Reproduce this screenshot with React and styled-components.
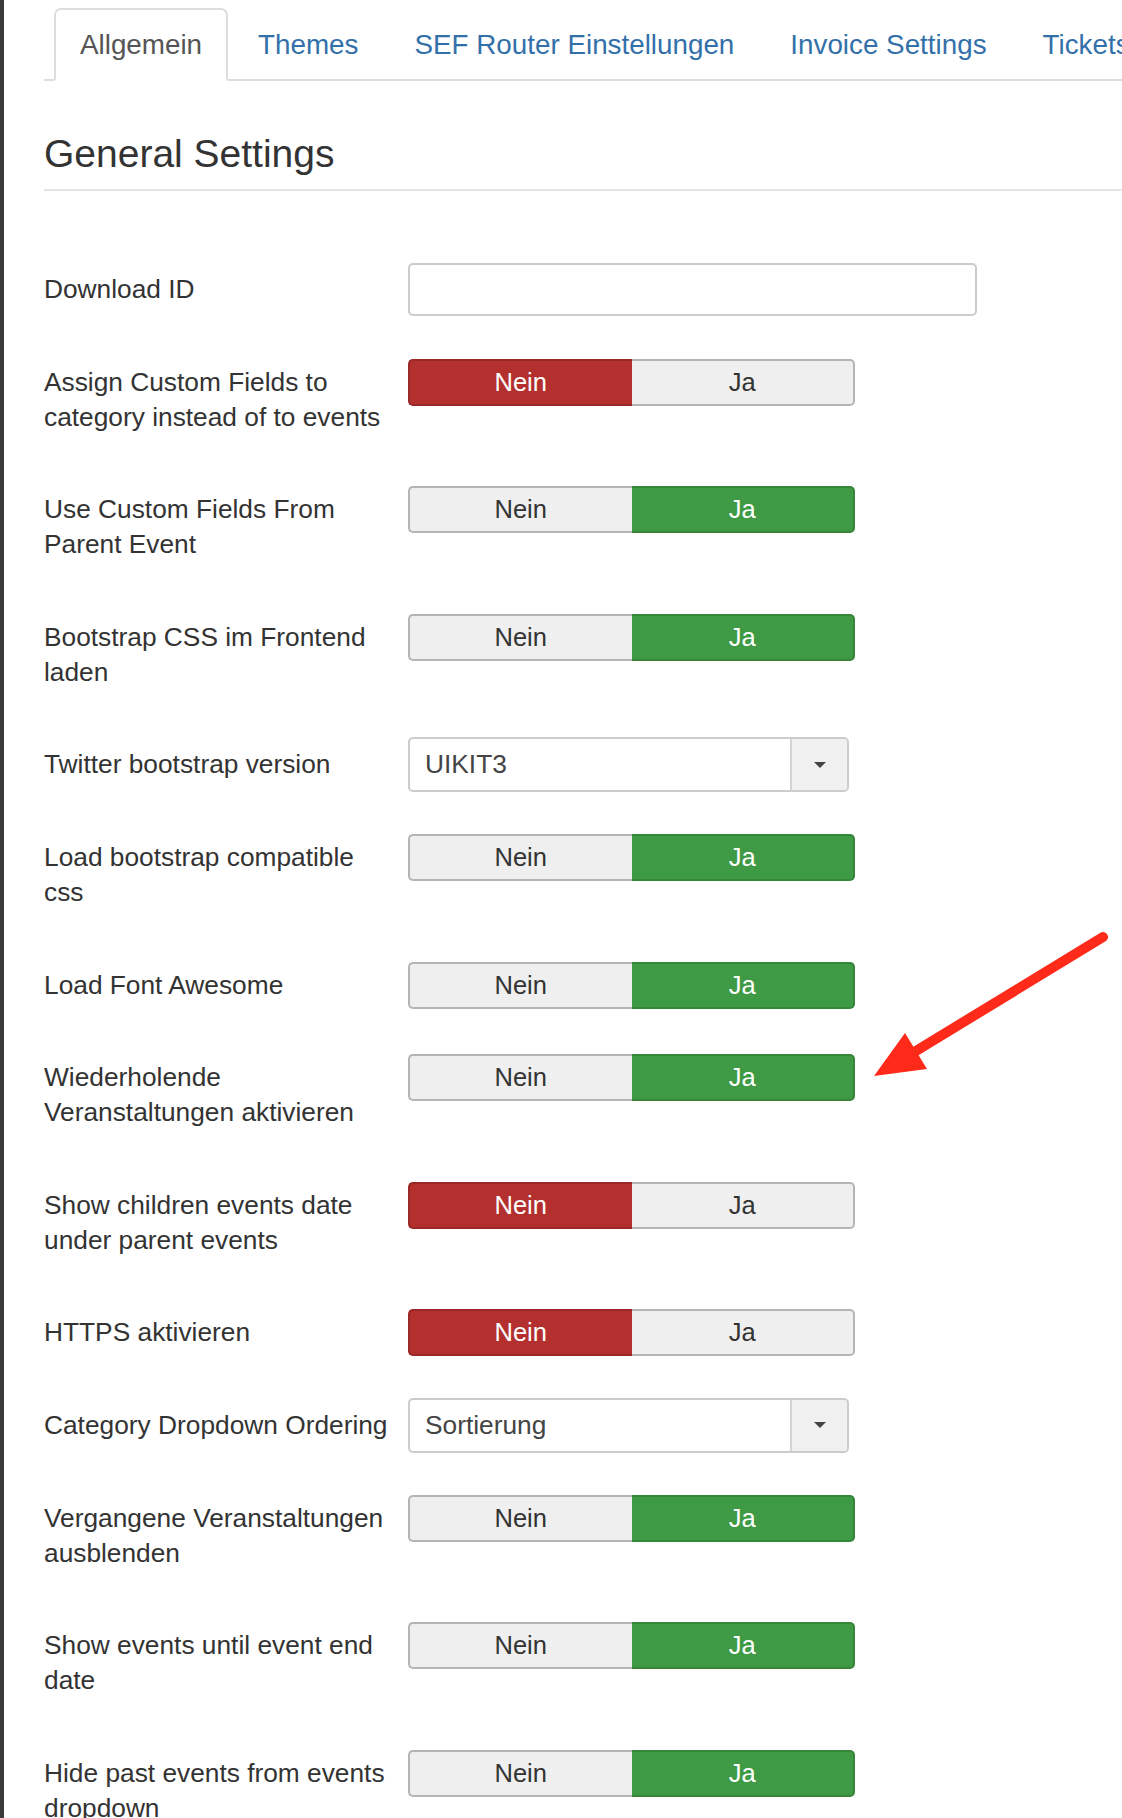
import React from "react";
import styled, { createGlobalStyle } from "styled-components";

const GlobalStyle = createGlobalStyle`
  html, body {
    margin: 0;
    padding: 0;
    background: #fff;
    overflow: hidden;
  }
  body {
    font-family: "Liberation Sans", Arial, Helvetica, sans-serif;
    color: #333;
  }
  * { box-sizing: border-box; }
`;

const Page = styled.div`
  position: relative;
  width: 1122px;
  min-height: 1818px;
  border-left: 4px solid #3a3a3a;
  padding-left: 40px;
  overflow: hidden;
`;

const TabBar = styled.ul`
  display: flex;
  align-items: flex-end;
  list-style: none;
  margin: 8px 0 0;
  padding: 0 0 0 10px;
  border-bottom: 2px solid #dddddd;
  white-space: nowrap;
`;

const Tab = styled.li`
  flex-shrink: 0;
  height: 73px;
  display: flex;
  align-items: center;
  padding: 0 24px;
  margin: 0 4px -2px 0;
  border: 2px solid ${(p) => (p.$active ? "#dddddd" : "transparent")};
  border-bottom: 2px solid ${(p) => (p.$active ? "#ffffff" : "transparent")};
  border-radius: 7px 7px 0 0;
  background: ${(p) => (p.$active ? "#ffffff" : "transparent")};
  font-size: 27.8px;
  color: ${(p) => (p.$active ? "#555555" : "#3370aa")};
`;

const Heading = styled.h2`
  margin: 51px 0 0;
  padding: 0 0 14px;
  font-size: 39px;
  line-height: 43px;
  font-weight: 400;
  color: #333;
  border-bottom: 2px solid #e5e5e5;
`;

const Form = styled.div`
  padding-top: 71px;
`;

const Row = styled.div`
  display: grid;
  grid-template-columns: 364px auto;
  align-items: start;
  margin-bottom: 37.6px;
`;

const Label = styled.div`
  width: 350px;
  padding: 10px 0;
  font-size: 26.3px;
  line-height: 35px;
  color: #333;
  min-height: 55px;
`;

const ControlCell = styled.div`
  height: 55px;
  display: flex;
  align-items: center;
`;

const TextInput = styled.div`
  width: 569px;
  height: 53px;
  border: 2px solid #cccccc;
  border-radius: 5px;
  background: #fff;
`;

const Toggle = styled.div`
  display: flex;
  width: 447px;
  height: 47px;
`;

const toneBg = { no: "#b3302f", yes: "#3f9a45" };
const toneBorder = { no: "#9a2827", yes: "#35853a" };

const ToggleOption = styled.div`
  flex: 1;
  display: flex;
  align-items: center;
  justify-content: center;
  font-size: 25.5px;
  color: ${(p) => (p.$active ? "#ffffff" : "#333333")};
  background: ${(p) => (p.$active ? toneBg[p.$tone] : "#efefef")};
  border: 2px solid ${(p) => (p.$active ? toneBorder[p.$tone] : "#b5b5b5")};
  ${(p) =>
    p.$first
      ? "border-radius: 5px 0 0 5px; border-right: none;"
      : "border-radius: 0 5px 5px 0; border-left: none;"}
`;

const Select = styled.div`
  display: flex;
  width: 441px;
  height: 55px;
  border: 2px solid #cccccc;
  border-radius: 5px;
  background: #fff;
  overflow: hidden;
`;

const SelectValue = styled.div`
  flex: 1;
  display: flex;
  align-items: center;
  padding-left: 15px;
  font-size: 26.3px;
  color: #444;
`;

const SelectArrow = styled.div`
  width: 57px;
  display: flex;
  align-items: center;
  justify-content: center;
  background: #f0f0f0;
  border-left: 2px solid #d4d4d4;
`;

const Caret = styled.span`
  width: 0;
  height: 0;
  border-left: 6px solid transparent;
  border-right: 6px solid transparent;
  border-top: 6px solid #444;
`;

const ArrowOverlay = styled.svg`
  position: absolute;
  left: 855px;
  top: 925px;
  width: 260px;
  height: 165px;
  overflow: visible;
`;

const tabs = ["Allgemein", "Themes", "SEF Router Einstellungen", "Invoice Settings", "Tickets Settings"];

const rows = [
  { label: "Download ID", type: "input" },
  { label: "Assign Custom Fields to category instead of to events", type: "toggle", value: "no" },
  { label: "Use Custom Fields From Parent Event", type: "toggle", value: "yes" },
  { label: "Bootstrap CSS im Frontend laden", type: "toggle", value: "yes" },
  { label: "Twitter bootstrap version", type: "select", value: "UIKIT3" },
  { label: "Load bootstrap compatible css", type: "toggle", value: "yes" },
  { label: "Load Font Awesome", type: "toggle", value: "yes" },
  { label: "Wiederholende Veranstaltungen aktivieren", type: "toggle", value: "yes" },
  { label: "Show children events date under parent events", type: "toggle", value: "no" },
  { label: "HTTPS aktivieren", type: "toggle", value: "no" },
  { label: "Category Dropdown Ordering", type: "select", value: "Sortierung" },
  { label: "Vergangene Veranstaltungen ausblenden", type: "toggle", value: "yes" },
  { label: "Show events until event end date", type: "toggle", value: "yes" },
  { label: "Hide past events from events dropdown", type: "toggle", value: "yes" },
];

function Control({ row }) {
  if (row.type === "input") return <TextInput />;
  if (row.type === "select")
    return (
      <Select>
        <SelectValue>{row.value}</SelectValue>
        <SelectArrow>
          <Caret />
        </SelectArrow>
      </Select>
    );
  return (
    <Toggle>
      <ToggleOption $first $tone="no" $active={row.value === "no"}>
        Nein
      </ToggleOption>
      <ToggleOption $tone="yes" $active={row.value === "yes"}>
        Ja
      </ToggleOption>
    </Toggle>
  );
}

export default function App() {
  return (
    <>
      <GlobalStyle />
      <Page>
        <TabBar>
          {tabs.map((t, i) => (
            <Tab key={t} $active={i === 0}>
              {t}
            </Tab>
          ))}
        </TabBar>
        <Heading>General Settings</Heading>
        <Form>
          {rows.map((r) => (
            <Row key={r.label}>
              <Label>{r.label}</Label>
              <ControlCell>
                <Control row={r} />
              </ControlCell>
            </Row>
          ))}
        </Form>
        <ArrowOverlay viewBox="0 0 260 165">
          <line x1="244" y1="12" x2="52" y2="129" stroke="#ff2a1a" strokeWidth="10" strokeLinecap="round" />
          <polygon points="15,151 46,108 68,144" fill="#ff2a1a" />
        </ArrowOverlay>
      </Page>
    </>
  );
}
